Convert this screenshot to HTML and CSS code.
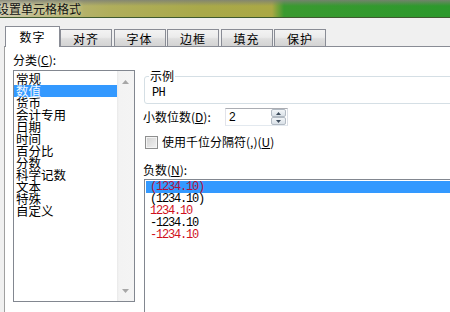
FILE: index.html
```html
<!DOCTYPE html>
<html lang="zh-CN">
<head>
<meta charset="utf-8">
<title>设置单元格格式</title>
<link rel="stylesheet" href="styles.css">
</head>
<body>
<div class="win">
  <div class="titlebar"><span class="title">设置单元格格式</span></div>
  <div class="tabs">
    <div class="tab active">数字</div>
    <div class="tab">对齐</div>
    <div class="tab">字体</div>
    <div class="tab">边框</div>
    <div class="tab">填充</div>
    <div class="tab">保护</div>
  </div>
  <div class="panel">
    <div class="col-left">
      <div class="label">分类(<u>C</u>):</div>
      <div class="listbox cats">
        <ul class="items">
          <li>常规</li>
          <li class="sel">数值</li>
          <li>货币</li>
          <li>会计专用</li>
          <li>日期</li>
          <li>时间</li>
          <li>百分比</li>
          <li>分数</li>
          <li>科学记数</li>
          <li>文本</li>
          <li>特殊</li>
          <li>自定义</li>
        </ul>
        <div class="vscroll">
          <svg width="7" height="4" viewBox="0 0 7 4"><path d="M0 4 L3.5 0 L7 4 Z" fill="#a7a7a7"/></svg>
          <svg width="7" height="4" viewBox="0 0 7 4"><path d="M0 0 L3.5 4 L7 0 Z" fill="#a7a7a7"/></svg>
        </div>
      </div>
    </div>
    <div class="col-right">
      <fieldset class="group">
        <legend>示例</legend>
        <div class="sample">PH</div>
      </fieldset>
      <div class="row decimals">
        <span class="rlabel">小数位数(<u>D</u>):</span>
        <div class="spin">
          <span class="spin-val">2</span>
          <div class="spin-btns">
            <div class="sbtn"><svg width="5" height="3" viewBox="0 0 5 3"><path d="M0 3 L2.5 0 L5 3 Z" fill="#3d4c5c"/></svg></div>
            <div class="sbtn"><svg width="5" height="3" viewBox="0 0 5 3"><path d="M0 0 L2.5 3 L5 0 Z" fill="#3d4c5c"/></svg></div>
          </div>
        </div>
      </div>
      <div class="row check">
        <span class="cbox"></span>
        <span class="clabel">使用千位分隔符(,)(<u>U</u>)</span>
      </div>
      <div class="label neglabel">负数(<u>N</u>):</div>
      <div class="listbox neg">
        <div class="nrow sel red">(1234.10)</div>
        <div class="nrow">(1234.10)</div>
        <div class="nrow red">1234.10</div>
        <div class="nrow">-1234.10</div>
        <div class="nrow red">-1234.10</div>
      </div>
    </div>
  </div>
</div>
</body>
</html>
```
FILE: styles.css
```css
html, body {
  margin: 0;
  padding: 0;
}
body {
  width: 450px;
  height: 312px;
  overflow: hidden;
  background: #f0f0f0;
  font-family: "Noto Sans CJK SC", "Noto Sans", sans-serif;
  font-size: 12px;
  color: #000;
}
.win {
  width: 450px;
  height: 312px;
  overflow: hidden;
}
.titlebar {
  height: 17px;
  border-bottom: 1px solid #3f5a30;
  background:
    linear-gradient(to bottom, rgba(125,128,118,0.85) 0, rgba(125,128,118,0) 6px),
    linear-gradient(to right, #cbc5a6 0, #bab67e 40px, #b0ae5c 110px, #a9a94a 200px, #aaa845 272px, #3a9a30 284px, #2c992c 450px);
  line-height: 17px;
  overflow: hidden;
}
.title {
  display: block;
  margin-left: -3px;
  font-size: 12px;
  color: #111;
  text-shadow: 0 0 5px rgba(235,235,220,0.9);
}
.tabs {
  display: flex;
  align-items: flex-end;
  height: 20px;
  margin-top: 8px;
  padding-left: 5px;
}
.tab {
  box-sizing: border-box;
  flex: none;
  width: 52px;
  height: 17px;
  margin-left: 1.5px;
  border: 1px solid #898c95;
  border-bottom: none;
  background: linear-gradient(to bottom, #f3f3f3 0, #ebebeb 45%, #dedede 55%, #d3d3d3 100%);
  text-align: center;
  line-height: 16px;
  padding-top: 1px;
  letter-spacing: 1px;
}
.tab.active {
  position: relative;
  z-index: 1;
  width: 55px;
  height: 21px;
  margin-left: 0;
  margin-bottom: -1px;
  background: #fff;
  line-height: 19px;
  padding-top: 0;
}
.tab.active + .tab {
  margin-left: 0;
}
.panel {
  display: flex;
  margin-left: 4px;
  width: 560px;
  height: 266px;
  border-top: 1px solid #898c95;
  border-left: 1px solid #a0a0a0;
  background: #fff;
  padding: 6px 0 0 8px;
}
.col-left {
  width: 122px;
  flex: none;
}
.label {
  height: 14px;
  line-height: 14px;
}
.listbox {
  box-sizing: border-box;
  border: 1px solid #828790;
  background: #fff;
}
.cats {
  margin-top: 3px;
  height: 232px;
  display: flex;
}
.items {
  flex: 1;
  margin: 0;
  padding: 2px 0 0 0;
  list-style: none;
}
.items li {
  height: 12px;
  line-height: 12px;
  padding-left: 2px;
  white-space: nowrap;
  font-size: 12.5px;
}
.items li.sel {
  background: #3399ff;
  color: #f4f8ff;
}
.vscroll {
  width: 17px;
  flex: none;
  background: linear-gradient(to right, #e9e9e9 0, #f3f3f3 2px, #f4f4f4 100%);
  display: flex;
  flex-direction: column;
  justify-content: space-between;
  align-items: center;
  padding: 9px 0 8px;
  box-sizing: border-box;
}
.col-right {
  margin-left: 8px;
  width: 420px;
  flex: none;
}
.group {
  margin: 16px 0 0 1px;
  padding: 0 0 3px 4px;
  border: 1px solid #d5dfe5;
  border-radius: 3px;
  min-width: 0;
}
.group legend {
  padding: 0 1px;
  line-height: 14px;
  height: 14px;
}
.sample {
  margin-top: 3px;
  padding-left: 3px;
  height: 14px;
  line-height: 14px;
  font-family: "Liberation Mono", monospace;
  font-size: 12px;
  letter-spacing: -0.6px;
}
.row {
  display: flex;
  align-items: center;
}
.decimals {
  margin-top: 4px;
  height: 18px;
}
.rlabel {
  width: 82px;
  flex: none;
  line-height: 14px;
}
.spin {
  box-sizing: border-box;
  width: 63px;
  height: 18px;
  display: flex;
  align-items: center;
  border: 1px solid #abadb3;
  border-left-color: #e2e3ea;
  border-right-color: #dbdfe6;
  border-bottom-color: #e3e9ef;
  background: #fff;
}
.spin-val {
  flex: 1;
  padding-left: 3px;
  line-height: 14px;
  font-family: "Liberation Sans", sans-serif;
  font-size: 12px;
}
.spin-btns {
  width: 15px;
  height: 16px;
  display: flex;
  flex-direction: column;
  margin-right: 1px;
}
.sbtn {
  flex: 1;
  box-sizing: border-box;
  border: 1px solid #b2bac3;
  border-radius: 2px;
  background: linear-gradient(to bottom, #f2f5f8, #d9e0e7);
  display: flex;
  align-items: center;
  justify-content: center;
}
.check {
  margin-top: 9px;
  height: 14px;
}
.cbox {
  box-sizing: border-box;
  width: 13px;
  height: 13px;
  margin-left: 2px;
  border: 1px solid #8e8f8f;
  background: linear-gradient(135deg, #d0d0d0 0, #e2e2e2 50%, #f2f2f2 100%);
  box-shadow: inset 0 0 0 1px #f4f4f4;
  flex: none;
}
.clabel {
  margin-left: 4px;
  line-height: 14px;
}
.neglabel {
  margin-top: 14px;
}
.neg {
  margin-top: 2px;
  margin-left: 1px;
  height: 135px;
  padding: 1px;
}
.nrow {
  height: 12px;
  line-height: 12px;
  padding-left: 4px;
  font-family: "Liberation Mono", monospace;
  font-size: 12px;
  letter-spacing: -1.2px;
  white-space: nowrap;
}
.nrow.red {
  color: #d0101c;
}
.nrow.sel {
  background: #3399ff;
  color: #b4103a;
}
u {
  text-decoration: underline;
}
```
